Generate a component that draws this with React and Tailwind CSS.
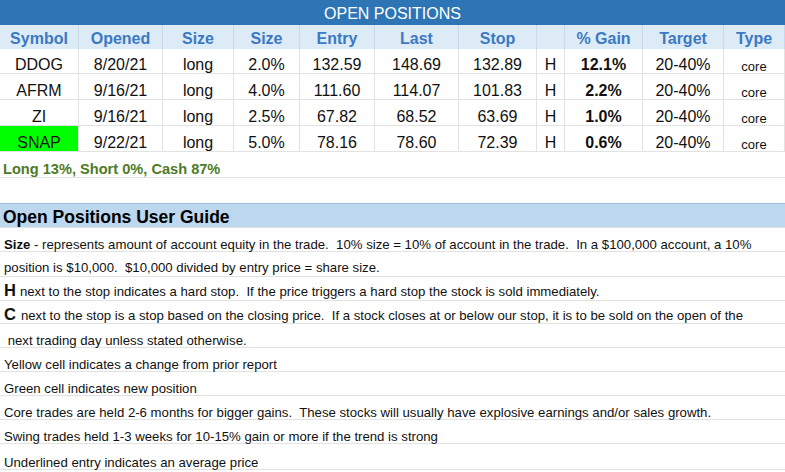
import React from "react";

const cols = "grid-cols-[79px_84px_71px_66px_75px_84px_78px_28px_78px_81px_61px]";

const headers = ["Symbol", "Opened", "Size", "Size", "Entry", "Last", "Stop", "", "% Gain", "Target", "Type"];

const positions = [
  { sym: "DDOG", opened: "8/20/21", dir: "long", size: "2.0%", entry: "132.59", last: "148.69", stop: "132.89", gain: "12.1%", h: "h-[25px]" },
  { sym: "AFRM", opened: "9/16/21", dir: "long", size: "4.0%", entry: "111.60", last: "114.07", stop: "101.83", gain: "2.2%", h: "h-[26px]" },
  { sym: "ZI", opened: "9/16/21", dir: "long", size: "2.5%", entry: "67.82", last: "68.52", stop: "63.69", gain: "1.0%", h: "h-[26px]" },
  { sym: "SNAP", opened: "9/22/21", dir: "long", size: "5.0%", entry: "78.16", last: "78.60", stop: "72.39", gain: "0.6%", h: "h-[26px]", isNew: true },
];

const Cell = ({ children, className = "" }) => (
  <div className={`flex items-end justify-center leading-none border-r border-b border-[#e2e2e2] ${className}`}>
    {children}
  </div>
);

// spreadsheet style row: text sits on the bottom edge
const GuideRow = ({ children, h = "h-[24px]" }) => (
  <div className={`flex items-end pl-[4px] leading-none border-b border-[#e2e2e2] text-[13.2px] text-[#111] whitespace-nowrap ${h}`}>
    {children}
  </div>
);

const App = () => {
  return (
    <div className="w-[785px] h-[472px] overflow-hidden bg-white font-['Liberation_Sans',Arial,sans-serif]">
      {/* title bar */}
      <div className="h-[25px] bg-[#2e75b6] flex items-end justify-center pb-[3px] leading-none text-white text-[16px]">
        OPEN POSITIONS
      </div>

      {/* header row */}
      <div className={`grid ${cols} h-[24px] bg-[#ddebf7]`}>
        {headers.map((h, i) => (
          <div
            key={i}
            className="flex items-end justify-center pb-[2px] leading-none border-r border-[#c8d8ea] text-[16px] font-bold text-[#3b79c2]"
          >
            {h}
          </div>
        ))}
      </div>

      {/* position rows */}
      {positions.map((p) => (
        <div key={p.sym} className={`grid ${cols} ${p.h} text-[16px] text-[#111]`}>
          <Cell className={p.isNew ? "bg-[#00ff00]" : ""}>{p.sym}</Cell>
          <Cell>{p.opened}</Cell>
          <Cell>{p.dir}</Cell>
          <Cell>{p.size}</Cell>
          <Cell>{p.entry}</Cell>
          <Cell>{p.last}</Cell>
          <Cell>{p.stop}</Cell>
          <Cell>H</Cell>
          <Cell className="font-bold">{p.gain}</Cell>
          <Cell>20-40%</Cell>
          <Cell className="text-[13px]">core</Cell>
        </div>
      ))}

      {/* allocation summary */}
      <div className="h-[26px] flex items-end pl-[3px] leading-none border-b border-[#e2e2e2] text-[14.6px] font-bold text-[#4e7b26]">
        Long 13%, Short 0%, Cash 87%
      </div>
      <div className="h-[26px] border-b border-[#9dbcd9]" />

      {/* user guide */}
      <div className="h-[24px] bg-[#bdd7ee] flex items-end pl-[3px] pb-[1px] leading-none border-b border-[#e2e2e2] text-[17.5px] font-bold text-black">
        Open Positions User Guide
      </div>
      <GuideRow>
        <span className="font-bold">Size</span>&nbsp;- represents amount of account equity in the trade.&nbsp; 10% size = 10% of account in the trade.&nbsp; In a $100,000 account, a 10%
      </GuideRow>
      <GuideRow h="h-[25px]">
        <span className="mb-[2px]">position is $10,000.&nbsp; $10,000 divided by entry price = share size.</span>
      </GuideRow>
      <GuideRow>
        <span className="mb-[2px]">
          <span className="font-bold text-[16.5px] mr-[4px]">H</span>next to the stop indicates a hard stop.&nbsp; If the price triggers a hard stop the stock is sold immediately.
        </span>
      </GuideRow>
      <GuideRow h="h-[23px]">
        <span className="mb-[1px]">
          <span className="font-bold text-[16.5px] mr-[5px]">C</span>next to the stop is a stop based on the closing price.&nbsp; If a stock closes at or below our stop, it is to be sold on the open of the
        </span>
      </GuideRow>
      <GuideRow>&nbsp;next trading day unless stated otherwise.</GuideRow>
      <GuideRow>Yellow cell indicates a change from prior report</GuideRow>
      <GuideRow>Green cell indicates new position</GuideRow>
      <GuideRow>Core trades are held 2-6 months for bigger gains.&nbsp; These stocks will usually have explosive earnings and/or sales growth.</GuideRow>
      <GuideRow>Swing trades held 1-3 weeks for 10-15% gain or more if the trend is strong</GuideRow>
      <GuideRow h="h-[26px]">Underlined entry indicates an average price</GuideRow>
    </div>
  );
};

export default App;
